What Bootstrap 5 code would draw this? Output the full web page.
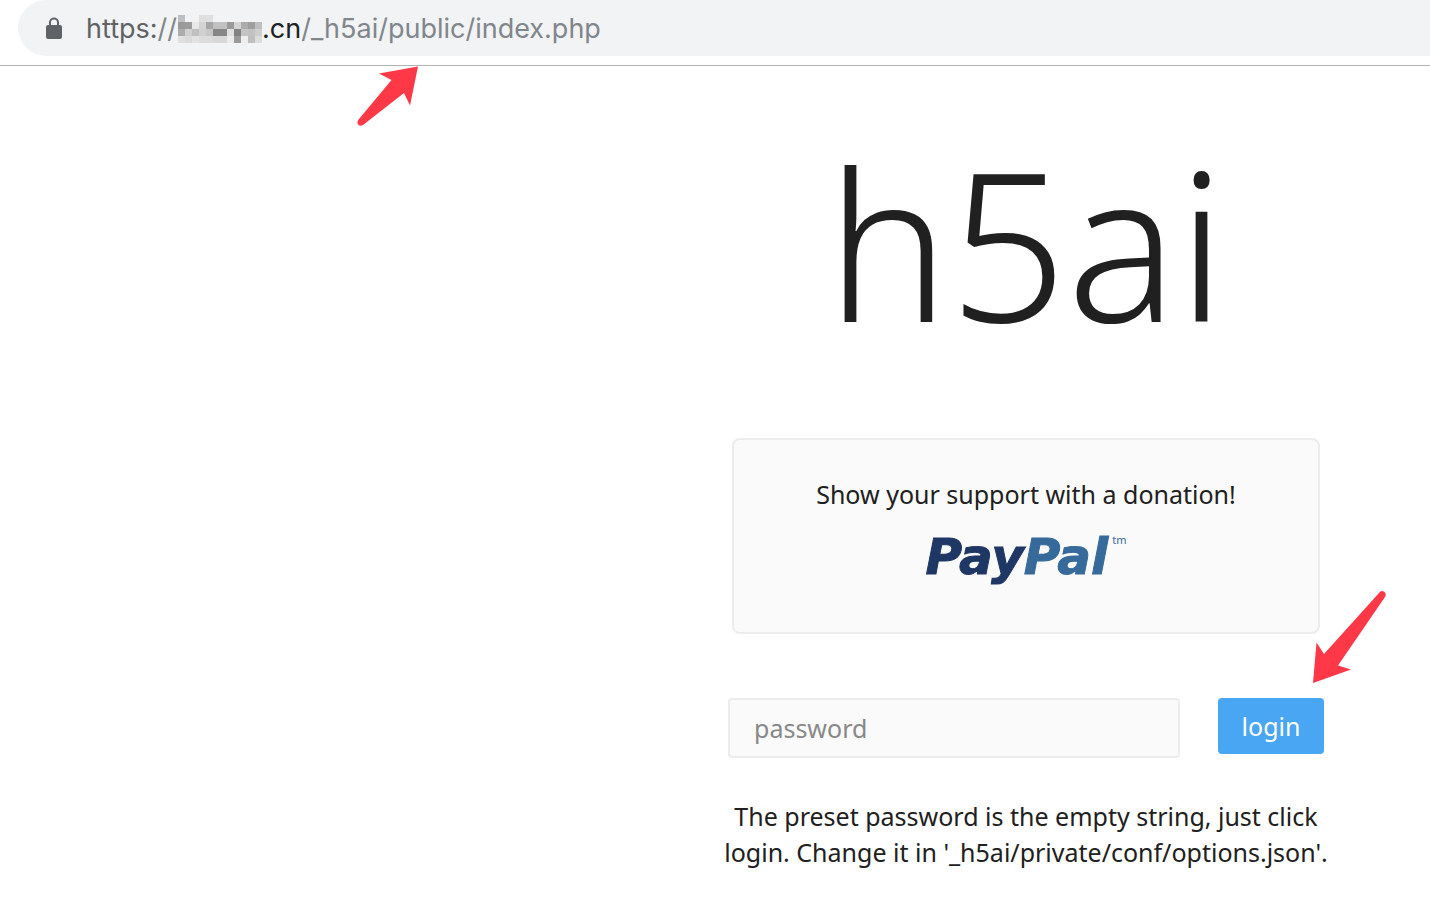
<!DOCTYPE html>
<html lang="en">
<head>
<meta charset="utf-8">
<meta name="viewport" content="width=device-width, initial-scale=1">
<title>h5ai</title>
<link href="https://cdn.jsdelivr.net/npm/bootstrap@5.3.0/dist/css/bootstrap.min.css" rel="stylesheet">
<style>
  body { font-family: "Noto Sans", "Open Sans", sans-serif; font-size: 25px; line-height: 36px; color: #202020; }
  .browser-bar { padding: 0 0 9px 18px; border-bottom: 1px solid #b3b3b3; }
  .address { height: 56px; padding: 2px 0 0 27px; border-radius: 28px 0 0 28px; background: #f1f3f4; font-family: Inter, "Liberation Sans", sans-serif; font-size: 27px; color: #80868b; white-space: nowrap; }
  .scheme { color: #5f6368; margin-left: 23px; }
  .slashes { color: #80868b; }
  .host { color: #202124; }
  .mosaic { margin-left: 1px; }
  .arrow-url { left: 357px; top: 66px; }
  .panel { width: 606px; margin-right: 101px; }
  .title { font-size: 206px; line-height: 288px; font-weight: 300; padding-top: 32px; margin-bottom: 52px; }
  .donation { width: 588px; max-width: 100%; height: 196px; border: 2px solid #ececec; border-radius: 8px; background: #fafafa; padding-top: 36px; }
  .paypal { font-family: "DejaVu Sans", sans-serif; font-size: 50px; line-height: 72px; font-weight: 700; font-style: italic; color: #1e3764; padding-top: 9px; -webkit-text-stroke: 1px; }
  .paypal .pal { color: #366a9b; }
  .paypal .tm { font-family: "Noto Sans", sans-serif; font-size: 11px; line-height: 12px; font-weight: 400; font-style: normal; color: #366a9b; margin: 13px 0 0 4px; -webkit-text-stroke: 0; }
  .login-form { width: 596px; max-width: 100%; margin-top: 64px; gap: 38px; }
  .login-form .form-control { height: 60px; padding: 0 24px; border: 2px solid #ececec; border-radius: 4px; background: #fafafa; font-size: 25px; }
  .login-form .form-control::placeholder { color: #888; }
  .login-form .btn { width: 106px; height: 56px; padding: 2px 0 0; border: 0; border-radius: 4px; background: #48a6f3; color: #fff; font-size: 25px; }
  .arrow-login { right: -62px; top: -108px; }
  .hint { margin-top: 40px; }
</style>
</head>
<body>
<header class="browser-bar position-relative">
  <div class="address d-flex align-items-center">
    <svg width="18" height="24" viewBox="0 0 18 24" aria-hidden="true"><path d="M5 9V5.500a4 4 0 0 1 8 0V9" fill="none" stroke="#5f6368" stroke-width="2"/><rect x="1" y="8" width="16" height="14" rx="2" fill="#5f6368"/></svg>
    <span class="scheme">https:<span class="slashes">//</span></span>
    <svg id="mosaic" class="mosaic" width="84" height="30" viewBox="0 0 84 30" shape-rendering="crispEdges" aria-hidden="true"></svg>
    <span class="host">.cn</span><span>/_h5ai/public/index.php</span>
  </div>
  <svg class="arrow-url position-absolute" width="62" height="60" viewBox="357 66 62 60" aria-hidden="true"><path d="M418 66.500 410 105.500 404 93 363 125Q359 127 357.500 123.500 357 121 359 119L391.500 80 379 73.500Z" fill="#ff3847"/></svg>
</header>
<main class="d-flex justify-content-end">
  <div class="panel text-center d-flex flex-column align-items-center">
    <h1 class="title">h5ai</h1>
    <section class="donation">
      <div>Show your support with a donation!</div>
      <a href="#" class="paypal d-flex justify-content-center text-decoration-none"><span>Pay<span class="pal">Pal</span></span><span class="tm">tm</span></a>
    </section>
    <form class="login-form d-flex align-items-start position-relative">
      <input type="password" class="form-control" placeholder="password" aria-label="password">
      <button type="button" class="btn flex-shrink-0">login</button>
      <svg class="arrow-login position-absolute" width="74" height="94" viewBox="1312 590 74 94" aria-hidden="true"><path d="M1313 683 1316.500 642.500 1324 654 1379 593Q1381 590 1384 591.500 1387 594 1385 597L1338 665.500 1351 669.500Z" fill="#ff3847"/></svg>
    </form>
    <p class="hint mb-0">The preset password is the empty string, just click<br>login. Change it in '_h5ai/private/conf/options.json'.</p>
  </div>
</main>
<script src="https://cdn.jsdelivr.net/npm/bootstrap@5.3.0/dist/js/bootstrap.bundle.min.js"></script>
<script>
  // Grey levels of the censored host name, one row per line of 7px cells
  const rows = [
    [192,241,241,223,224,241,241,241,241,241,241,241],
    [154,156,232,211,166,192,192,154,212,172,158,190],
    [172,208,192,208,199,134,134,224,130,196,194,206],
    [224,218,226,220,220,216,216,236,154,238,190,220]
  ];
  document.getElementById('mosaic').innerHTML = rows.map((row, y) => row.map((g, x) =>
    g === 241 ? '' : `<rect x="${x * 7}" y="${y * 7 + 1}" width="7" height="7" fill="rgb(${g},${g},${g})"/>`).join('')).join('');
</script>
</body>
</html>
